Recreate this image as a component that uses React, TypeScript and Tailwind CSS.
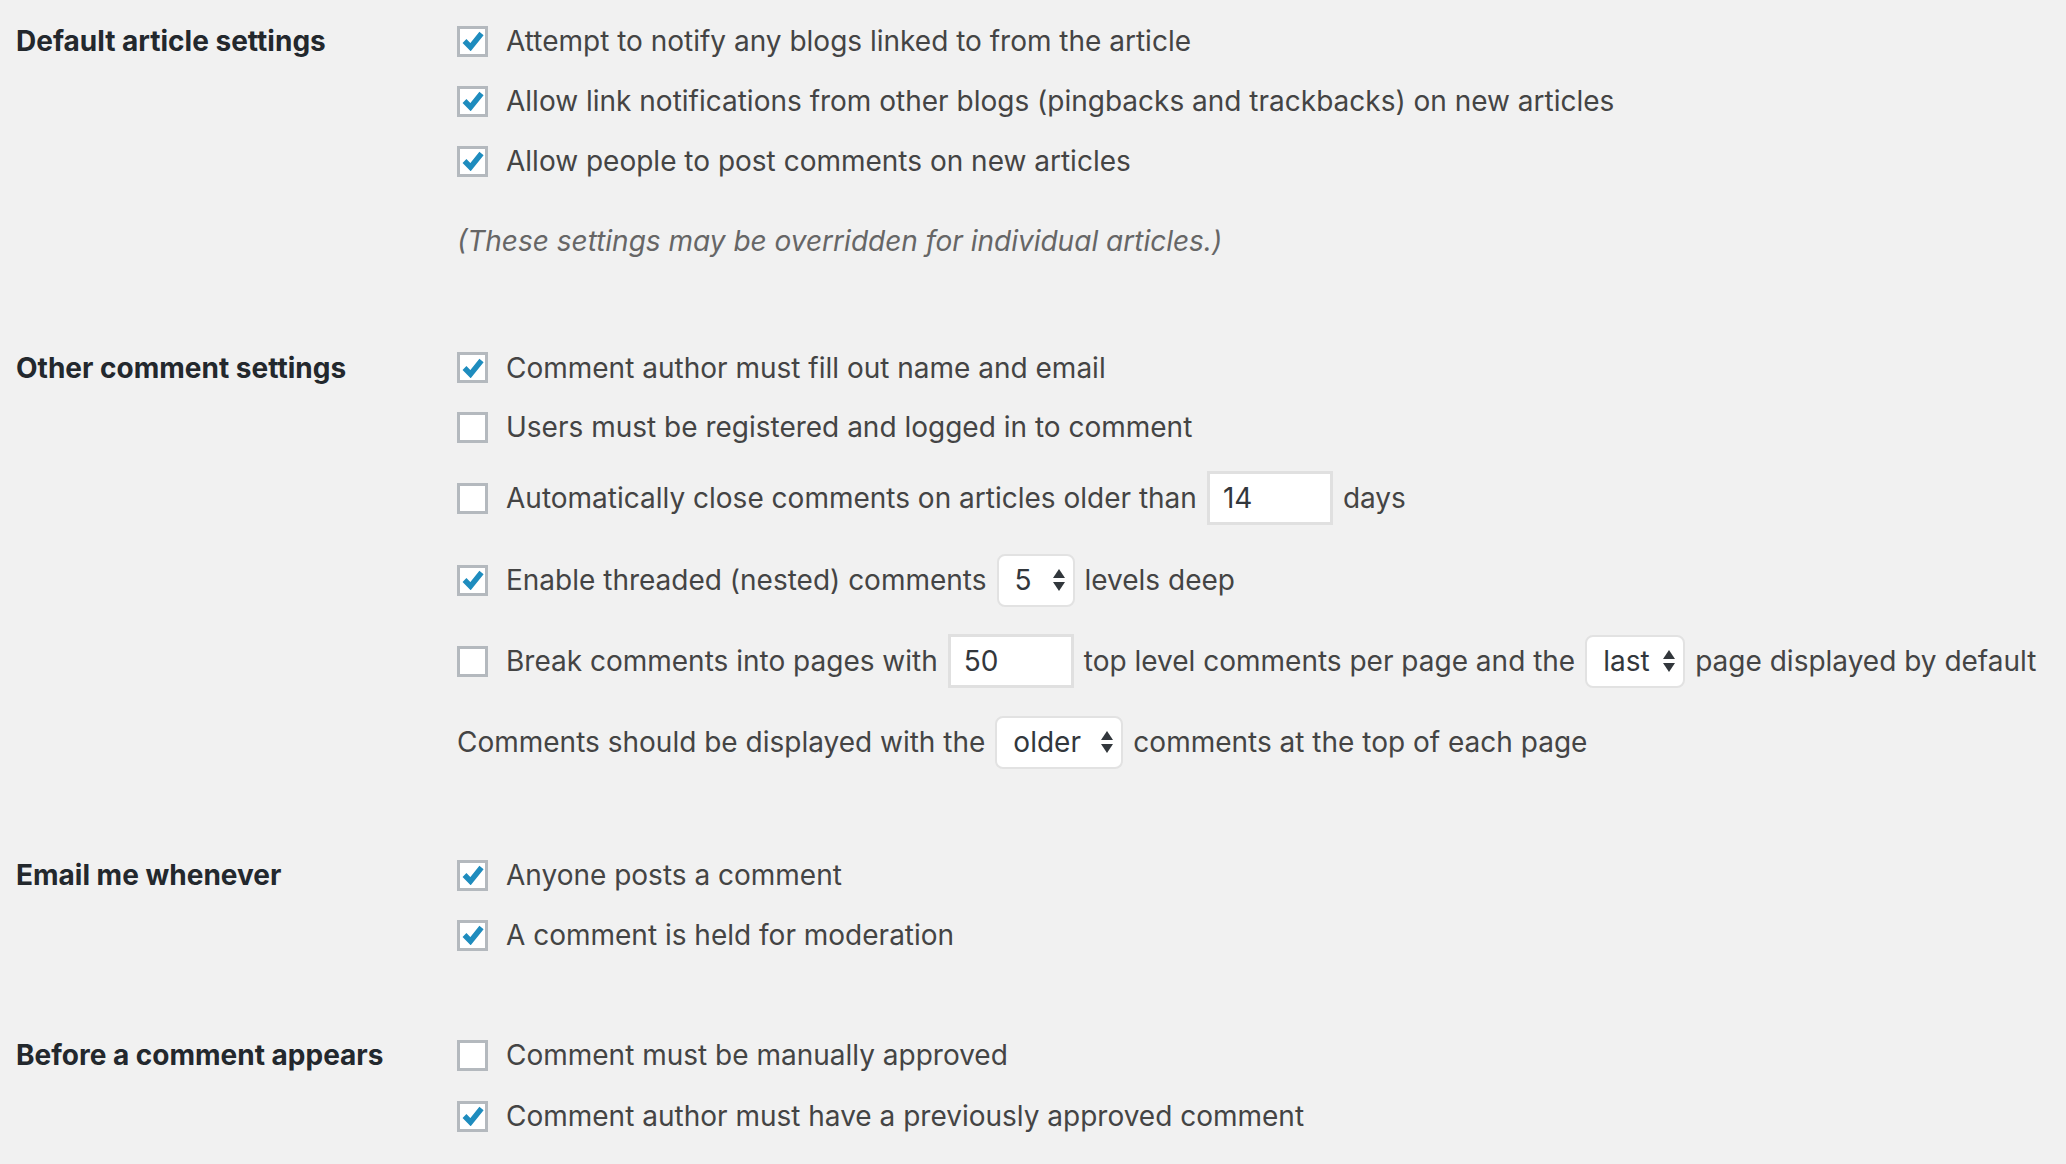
import type { ReactNode } from "react";

const font = { fontFamily: 'Inter, "Liberation Sans", Arial, sans-serif' };

function Box({ checked }: { checked?: boolean }) {
  return (
    <span className="flex items-center justify-center w-[31px] h-[31px] shrink-0 border-[3px] border-[#b4b9be] bg-white mr-[18px]">
      {checked && (
        <svg width="22" height="20" viewBox="0 0 22 20">
          <path d="M2.5 10 L8.5 16.2 L19.5 2.5" fill="none" stroke="#1e8cbe" strokeWidth="5.4" />
        </svg>
      )}
    </span>
  );
}

function Arrows() {
  return (
    <svg width="12" height="22" viewBox="0 0 12 22" className="ml-auto">
      <path d="M6 0 L12 9 L0 9 Z" fill="#32373c" />
      <path d="M0 13 L12 13 L6 22 Z" fill="#32373c" />
    </svg>
  );
}

function Select({ value, w }: { value: string; w: string }) {
  return (
    <span
      className={`flex items-center h-[53px] ${w} rounded-[8px] border-2 border-[#e2e2e2] bg-white pl-[16px] pr-[8px] mx-[10px]`}
    >
      <span className="text-[#32373c]">{value}</span>
      <Arrows />
    </span>
  );
}

function Input({ value }: { value: string }) {
  return (
    <span className="flex items-center h-[54px] w-[126px] border-[3px] border-[#e0e0e0] bg-white pl-[13px] mx-[10px] text-[#32373c]">
      {value}
    </span>
  );
}

function Row({ children, className = "h-[60px]" }: { children: ReactNode; className?: string }) {
  return <div className={`flex items-center whitespace-nowrap ${className}`}>{children}</div>;
}

function Section({ label, children, className }: { label: string; children: ReactNode; className?: string }) {
  return (
    <div className={`flex ${className ?? ""}`}>
      <div className="w-[441px] shrink-0 h-[60px] flex items-center font-bold text-[#23282d]">{label}</div>
      <div className="flex flex-col">{children}</div>
    </div>
  );
}

export default function App() {
  return (
    <div className="w-[2066px] h-[1164px] bg-[#f1f1f1] text-[#444] text-[28px] pl-[16px] pt-[11px] overflow-hidden" style={font}>
      <Section label="Default article settings">
        <Row><Box checked />Attempt to notify any blogs linked to from the article</Row>
        <Row><Box checked />Allow link notifications from other blogs (pingbacks and trackbacks) on new articles</Row>
        <Row><Box checked />Allow people to post comments on new articles</Row>
        <Row className="h-[60px] mt-[20px]">
          <span className="italic text-[#666]">(These settings may be overridden for individual articles.)</span>
        </Row>
      </Section>

      <Section label="Other comment settings" className="mt-[67px]">
        <Row className="h-[59px]"><Box checked />Comment author must fill out name and email</Row>
        <Row><Box />Users must be registered and logged in to comment</Row>
        <Row className="h-[54px] mt-[14px]">
          <Box />Automatically close comments on articles older than
          <Input value="14" />
          days
        </Row>
        <Row className="h-[54px] mt-[28px]">
          <Box checked />Enable threaded (nested) comments
          <Select value="5" w="w-[78px]" />
          levels deep
        </Row>
        <Row className="h-[54px] mt-[27px]">
          <Box />Break comments into pages with
          <Input value="50" />
          top level comments per page and the
          <Select value="last" w="w-[100px]" />
          page displayed by default
        </Row>
        <Row className="h-[54px] mt-[27px]">
          Comments should be displayed with the
          <Select value="older" w="w-[128px]" />
          comments at the top of each page
        </Row>
      </Section>

      <Section label="Email me whenever" className="mt-[76px]">
        <Row><Box checked />Anyone posts a comment</Row>
        <Row><Box checked />A comment is held for moderation</Row>
      </Section>

      <Section label="Before a comment appears" className="mt-[60px]">
        <Row><Box />Comment must be manually approved</Row>
        <Row className="h-[60px] mt-[1px]"><Box checked />Comment author must have a previously approved comment</Row>
      </Section>
    </div>
  );
}
